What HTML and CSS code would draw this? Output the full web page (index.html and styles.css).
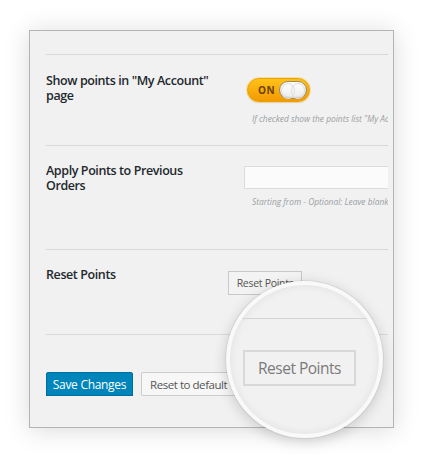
FILE: index.html
```html
<!DOCTYPE html>
<html>
<head>
<meta charset="utf-8">
<link rel="stylesheet" href="styles.css">
</head>
<body>
<div class="panel">
  <div class="content">
    <div class="row row-1">
      <div class="label">Show points in "My Account" page</div>
      <div class="field">
        <div class="toggle"><span class="on">ON</span><span class="knob"></span></div>
        <div class="hint hint-1">If checked show the points list "My Account" page</div>
      </div>
    </div>
    <div class="row row-2">
      <div class="label">Apply Points to Previous Orders</div>
      <div class="field">
        <div class="input"></div>
        <div class="hint hint-2">Starting from - Optional: Leave blank</div>
      </div>
    </div>
    <div class="row row-3">
      <div class="label">Reset Points</div>
      <div class="field">
        <div class="btn-small">Reset Points</div>
      </div>
    </div>
    <div class="row row-4">
      <div class="btn-primary">Save Changes</div>
      <div class="btn-secondary">Reset to default</div>
    </div>
  </div>
  <div class="lens">
    <div class="lens-line"></div>
    <div class="lens-btn">Reset Points</div>
  </div>
</div>
</body>
</html>
```
FILE: styles.css
```css
* { box-sizing: border-box; }
html, body { margin: 0; background: #fff; }
body {
  width: 422px;
  height: 459px;
  padding: 30px 0 0 29px;
  font-family: "Open Sans", "DejaVu Sans", sans-serif;
  overflow: hidden;
}
.panel {
  position: relative;
  width: 365px;
  height: 398px;
  background: #f1f1f1;
  border: 1px solid #b4b4b4;
  box-shadow: 0 2px 24px rgba(0,0,0,0.15);
  padding: 23px 5px 0 16px;
}
.content {
  width: 342px;
  overflow: hidden;
}
.row {
  display: flex;
  border-top: 1px solid #d9d9d9;
}
.label {
  width: 182px;
  font-size: 12.5px;
  font-weight: 600;
  letter-spacing: -0.4px;
  line-height: 15px;
  color: #23282d;
  padding-right: 6px;
}
.field {
  flex: 1;
  min-width: 0;
}
.row-1 { height: 91px; }
.row-1 .label { padding-top: 18px; }
.row-1 .field { padding-top: 23px; padding-left: 19px; }
.toggle {
  position: relative;
  width: 63px;
  height: 24px;
  border-radius: 12px;
  background: linear-gradient(#ffc21a, #f39a00);
  border: 1px solid #e8a200;
  box-shadow: 0 0 0 1px rgba(255,210,120,0.6), 0 1px 1px rgba(0,0,0,0.15);
}
.on {
  position: absolute;
  left: 10px;
  top: 4px;
  font-size: 10px;
  font-weight: 700;
  color: #6a4100;
  letter-spacing: 0.5px;
  line-height: 14px;
}
.knob {
  position: absolute;
  right: 2px;
  top: 2px;
  width: 28px;
  height: 18px;
  border-radius: 9px;
  background: linear-gradient(#ffffff, #ececec);
  border: 1px solid #9a8a70;
  box-shadow: inset 0 -1px 2px rgba(0,0,0,0.15);
}
.knob::before, .knob::after {
  content: "";
  position: absolute;
  top: 1px;
  width: 12px;
  height: 14px;
  border-radius: 50%;
  border: 1px solid #e0e0e0;
}
.knob::before { left: 1px; }
.knob::after { right: 1px; }
.hint {
  font-size: 8.4px;
  font-style: italic;
  color: #9a9ea3;
  white-space: nowrap;
  line-height: 12px;
}
.hint-1 { margin-top: 11px; margin-left: 5px; }
.row-2 { height: 104px; }
.row-2 .label { padding-top: 17px; }
.row-2 .field { padding-top: 20px; padding-left: 16px; }
.input {
  width: 160px;
  height: 23px;
  background: #fbfbfb;
  border: 1px solid #dcdcdc;
}
.hint-2 { margin-top: 7px; margin-left: 8px; }
.row-3 { height: 85px; }
.row-3 .label { padding-top: 17px; }
.row-3 .field { padding-top: 20px; }
.btn-small {
  display: inline-flex;
  align-items: center;
  justify-content: center;
  width: 74px;
  height: 24px;
  background: #f3f3f3;
  border: 1px solid #c9c9c9;
  font-size: 10.5px;
  letter-spacing: -0.3px;
  white-space: nowrap;
  color: #555;
}
.row-4 {
  padding-top: 37px;
  gap: 8px;
}
.btn-primary, .btn-secondary {
  display: inline-flex;
  align-items: center;
  height: 24px;
  font-size: 12px;
  letter-spacing: -0.3px;
  white-space: nowrap;
  border-radius: 2px;
}
.btn-primary {
  width: 87px;
  justify-content: center;
  background: #0085ba;
  border: 1px solid #006f9e;
  color: #fff;
  box-shadow: 0 1px 0 #005a80;
}
.btn-secondary {
  width: 120px;
  padding-left: 8px;
  font-size: 11.5px;
  letter-spacing: -0.45px;
  background: #f7f7f7;
  border: 1px solid #cccccc;
  color: #555;
}
.lens {
  position: absolute;
  left: 196px;
  top: 250px;
  width: 157px;
  height: 157px;
  border-radius: 50%;
  background: #f1f1f1;
  border: 4px solid #f9f9f9;
  box-shadow: 0 0 0 1px rgba(0,0,0,0.06), 0 3px 14px rgba(0,0,0,0.18), inset 0 0 10px rgba(0,0,0,0.07);
  overflow: hidden;
}
.lens-line {
  position: absolute;
  left: 0;
  right: 0;
  top: 33px;
  border-top: 1px solid #d4d4d4;
}
.lens-btn {
  position: absolute;
  left: 13px;
  top: 65px;
  width: 113px;
  height: 36px;
  display: flex;
  align-items: center;
  justify-content: center;
  border: 2px solid #d8d8d8;
  background: #f1f1f1;
  font-size: 15.5px;
  letter-spacing: -0.5px;
  color: #7a7a7a;
}
```
